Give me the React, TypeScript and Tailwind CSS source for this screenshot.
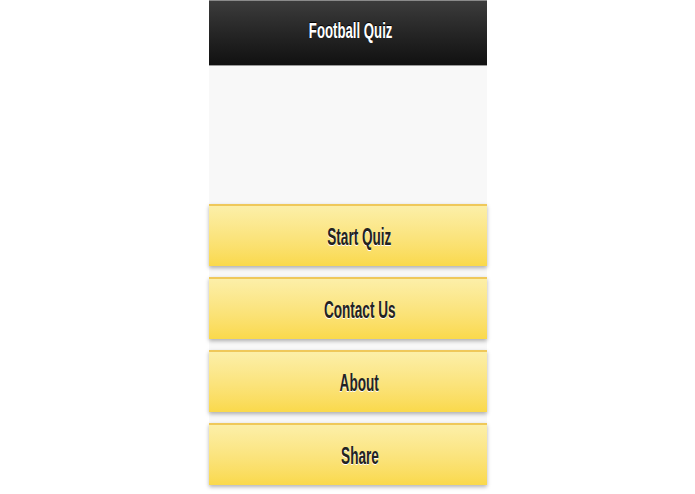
import React from "react";

const items = ["Start Quiz", "Contact Us", "About", "Share"];

export default function App() {
  return (
    <div className="w-full h-[494px] bg-white overflow-hidden" style={{ fontFamily: '"Liberation Sans", Arial, sans-serif' }}>
      <div className="mx-auto w-[278px]">
        <div className="h-[66px] border-t border-t-[#8a8a8a] border-b border-b-[#9a9a9a] bg-gradient-to-b from-[#3c3c3c] to-[#111111] flex items-center justify-center pb-[5px] pl-[6px]">
          <span className="inline-block scale-x-[0.6] text-[22px] font-bold text-white leading-none [text-shadow:0_-1px_1px_#000]">
            Football Quiz
          </span>
        </div>
        <div className="bg-[#f8f8f8] pt-[138px] flex flex-col gap-[11px]">
          {items.map((t) => (
            <div
              key={t}
              className="h-[62px] border-t-2 border-t-[#efc85a] bg-gradient-to-b from-[#fcefa8] to-[#fad94a] shadow-[0_2px_4px_rgba(0,0,0,0.3)] flex items-center justify-center pl-[24px] pt-[2px]"
            >
              <span className="inline-block scale-x-[0.59] text-[23px] font-bold text-[#222] leading-none [text-shadow:0_1px_0_#fff]">
                {t}
              </span>
            </div>
          ))}
        </div>
      </div>
    </div>
  );
}
